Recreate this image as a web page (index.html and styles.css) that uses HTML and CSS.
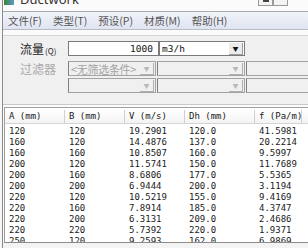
FILE: index.html
```html
<!DOCTYPE html>
<html lang="zh">
<head>
    <meta charset="UTF-8">
    <link rel="stylesheet" href="styles.css">
</head>
<body>
    <div class="window">
        <div class="titlebar">
            <span class="app-icon"></span>
            <span class="title">Ductwork</span>
            <span class="caption-btns"><span class="cap-btn"><i></i></span><span class="cap-btn"></span></span>
        </div>

        <div class="menubar">
            <span>文件(F)</span>
            <span>类型(T)</span>
            <span>预设(P)</span>
            <span>材质(M)</span>
            <span>帮助(H)</span>
        </div>

        <div class="panel">
            <div class="row">
                <span class="lbl">流量<small>(Q)</small></span>
                <div class="edit">1000</div>
                <div class="combo unit"><span class="val">m3/h</span><span class="arrow">&#9660;</span></div>
            </div>
            <div class="row">
                <span class="lbl dis">过滤器</span>
                <div class="combo dis first"><span class="val">&lt;无筛选条件&gt;</span><span class="arrow">&#9660;</span></div>
                <div class="combo dis second"><span class="val"></span><span class="arrow">&#9660;</span></div>
                <div class="box dis"></div>
            </div>
            <div class="row tight">
                <span class="lbl"></span>
                <div class="combo dis first"><span class="val"></span><span class="arrow">&#9660;</span></div>
                <div class="combo dis second"><span class="val"></span><span class="arrow">&#9660;</span></div>
                <div class="box dis"></div>
            </div>
        </div>

        <div class="list">
            <div class="head">
                <span>A (mm)</span><span>B (mm)</span><span>V (m/s)</span><span>Dh (mm)</span><span>f (Pa/m)</span>
            </div>
            <div class="rows">
                <span>120</span><span>120</span><span>19.2901</span><span>120.0</span><span>41.5981</span>
                <span>160</span><span>120</span><span>14.4876</span><span>137.0</span><span>20.2214</span>
                <span>160</span><span>160</span><span>10.8507</span><span>160.0</span><span>9.5997</span>
                <span>200</span><span>120</span><span>11.5741</span><span>150.0</span><span>11.7689</span>
                <span>200</span><span>160</span><span>8.6806</span><span>177.0</span><span>5.5365</span>
                <span>200</span><span>200</span><span>6.9444</span><span>200.0</span><span>3.1194</span>
                <span>220</span><span>120</span><span>10.5219</span><span>155.0</span><span>9.4169</span>
                <span>220</span><span>160</span><span>7.8914</span><span>185.0</span><span>4.3747</span>
                <span>220</span><span>200</span><span>6.3131</span><span>209.0</span><span>2.4686</span>
                <span>220</span><span>220</span><span>5.7392</span><span>220.0</span><span>1.9371</span>
                <span>250</span><span>120</span><span>9.2593</span><span>162.0</span><span>6.9869</span>
            </div>
        </div>
        <div class="bottom"></div>
    </div>
</body>
</html>
```

FILE: styles.css
```css
body {
    margin: 0;
    width: 308px;
    height: 248px;
    overflow: hidden;
    background: #f7f7f7;
    font-family: "Noto Sans CJK SC", sans-serif;
}

.window {
    margin-left: 2px;
    border-left: 1px solid #8a8a8a;
    height: 248px;
    display: flex;
    flex-direction: column;
    background: #fbfbfb;
}

/* title bar, mostly cut off at the top */
.titlebar {
    height: 11px;
    display: flex;
    align-items: flex-start;
    overflow: hidden;
    background: #fbfbfb;
    border-bottom: 1px solid #a9a9a9;
}

.app-icon {
    width: 10px;
    height: 5px;
    margin-left: 1px;
    background: linear-gradient(90deg, #3f7f3a, #5a9ec9);
}

.title {
    margin-left: 6px;
    margin-top: -9px;
    font-family: "Noto Sans", sans-serif;
    font-size: 13px;
    line-height: 16px;
    color: #333;
}

.caption-btns {
    margin-left: auto;
    margin-right: 20px;
    display: flex;
}

.cap-btn {
    width: 13px;
    height: 5px;
    border: 1px solid #9a9a9a;
    border-top: none;
    background: #f4f4f4;
    display: flex;
    justify-content: center;
}

.cap-btn i {
    width: 6px;
    height: 2px;
    background: #444;
}

/* menu */
.menubar {
    height: 17px;
    display: flex;
    gap: 11px;
    padding-left: 5px;
    align-items: center;
    font-size: 10.5px;
    color: #555;
    background: linear-gradient(#f2f4fa, #dfe4f1);
    border-bottom: 1px solid #b9bcc4;
}

/* filter panel */
.panel {
    margin-top: 5px;
    border-top: 1px solid #d6d6d6;
    background: #f0f0f0;
    height: 63px;
    padding-top: 5px;
    display: flex;
    flex-direction: column;
    gap: 5px;
    border-bottom: 1px solid #c8c8c8;
}

.row {
    display: flex;
    align-items: center;
    height: 15px;
}

.row.tight {
    margin-top: -3px;
}

.lbl {
    width: 48px;
    padding-left: 17px;
    font-size: 12px;
    color: #222;
    white-space: nowrap;
}

.lbl small {
    font-size: 8px;
    margin-left: 1px;
}

.lbl.dis {
    color: #a8a8a8;
}

.edit {
    width: 84px;
    height: 13px;
    border: 1px solid #7a7a7a;
    background: #fff;
    text-align: right;
    padding-right: 5px;
    font-family: "DejaVu Sans Mono", monospace;
    font-size: 9.5px;
    line-height: 13px;
    color: #111;
}

.combo {
    height: 13px;
    border: 1px solid #7a7a7a;
    background: #fff;
    display: flex;
    align-items: center;
}

.combo.unit {
    width: 84px;
}

.combo .val {
    flex: 1;
    padding-left: 2px;
    font-family: "DejaVu Sans Mono", monospace;
    font-size: 9.5px;
    color: #111;
    white-space: nowrap;
    overflow: hidden;
}

.arrow {
    width: 13px;
    height: 11px;
    margin-right: 1px;
    background: #ececec;
    border-right: 1px solid #9b9b9b;
    border-bottom: 1px solid #9b9b9b;
    font-size: 6px;
    line-height: 11px;
    text-align: center;
    color: #111;
}

.combo.dis {
    background: #f0f0f0;
    border-color: #a3a3a3;
    border-left-color: #808080;
}

.combo.dis .val {
    font-family: "Noto Sans CJK SC", sans-serif;
    font-size: 11px;
    letter-spacing: -0.3px;
    color: #a3a3a3;
}

.combo.dis .arrow {
    color: #b8b8b8;
    background: #f0f0f0;
    border-color: #b0b0b0;
}

.combo.first {
    width: 86px;
}

.combo.second {
    width: 86px;
    margin-left: 1px;
}

.box {
    flex: 1;
    height: 13px;
    margin-left: 1px;
    border: 1px solid #a3a3a3;
    border-left-color: #808080;
    border-right: none;
    background: #f0f0f0;
}

/* result list */
.list {
    margin-top: 2px;
    margin-left: 1px;
    height: 134px;
    overflow: hidden;
    background: #fff;
    border-top: 1px solid #a0a0a0;
    border-left: 1px solid #a0a0a0;
    border-bottom: 1px solid #8c8c8c;
    font-family: "DejaVu Sans Mono", monospace;
    font-size: 9px;
    color: #1a1a1a;
}

.head {
    display: grid;
    grid-template-columns: 60px 60px 60px 70px 47px;
    height: 13px;
    margin-top: 2px;
    border-bottom: 1px solid #d5d5d5;
    background: linear-gradient(#fff, #f3f3f3);
}

.head span {
    padding-left: 4px;
    line-height: 13px;
    border-right: 1px solid #d0d0d0;
    white-space: nowrap;
}

.rows {
    display: grid;
    grid-template-columns: 60px 60px 60px 70px 47px;
    grid-auto-rows: 11px;
    padding-top: 2px;
}

.rows span {
    padding-left: 4px;
    line-height: 11px;
}

.bottom {
    flex: 1;
    background: #f4f4f4;
}
```
